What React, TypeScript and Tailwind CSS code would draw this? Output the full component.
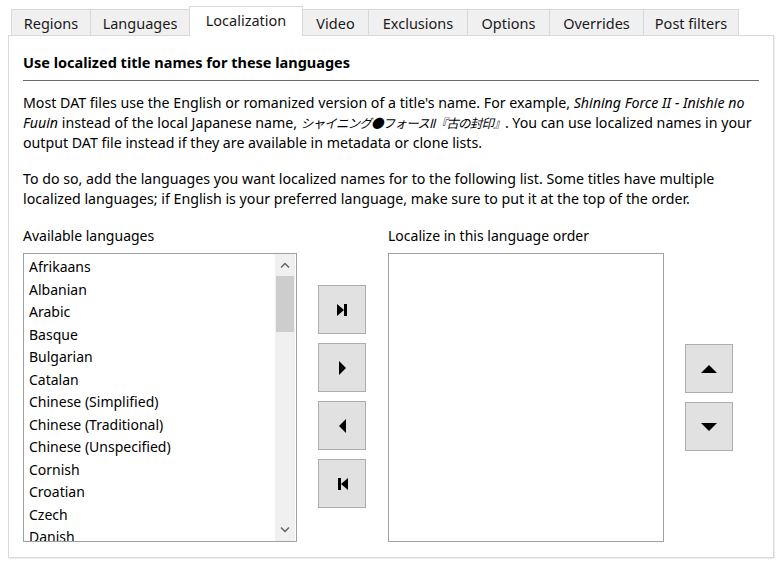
import React from "react";

const tabs: { label: string; w: string; active?: boolean }[] = [
  { label: "Regions", w: "w-[80px]" },
  { label: "Languages", w: "w-[100px]" },
  { label: "Localization", w: "w-[114px]", active: true },
  { label: "Video", w: "w-[67px]" },
  { label: "Exclusions", w: "w-[100px]" },
  { label: "Options", w: "w-[83px]" },
  { label: "Overrides", w: "w-[95px]" },
  { label: "Post filters", w: "w-[96px]" },
];

const languages = [
  "Afrikaans",
  "Albanian",
  "Arabic",
  "Basque",
  "Bulgarian",
  "Catalan",
  "Chinese (Simplified)",
  "Chinese (Traditional)",
  "Chinese (Unspecified)",
  "Cornish",
  "Croatian",
  "Czech",
  "Danish",
];

function Btn({ children }: { children: React.ReactNode }) {
  return (
    <div className="w-[48px] h-[49px] bg-[#e1e1e1] border border-[#adadad] flex items-center justify-center">
      {children}
    </div>
  );
}

export default function App() {
  return (
    <div
      className="w-[784px] h-[568px] bg-white text-[15px] text-[#000] overflow-hidden"
      style={{ fontFamily: '"Noto Sans", "Open Sans", sans-serif' }}
    >
      {/* Tab strip */}
      <div className="flex items-end pl-[11px] pt-[6px] h-[35px]">
        {tabs.map((t, i) => (
          <div
            key={t.label}
            className={
              (t.active
                ? "h-[30px] bg-white relative z-10 -mb-px pb-[2px] "
                : "h-[26px] bg-[#f0f0f0] pt-[2px] ") +
              t.w +
              (i > 0 ? " -ml-px" : "") +
              " border border-b-0 border-[#d9d9d9] flex items-center justify-center text-[14.5px] leading-none text-[#1a1a1a]"
            }
          >
            {t.label}
          </div>
        ))}
      </div>

      {/* Panel */}
      <div className="ml-[8px] w-[766px] h-[523px] border border-[#d9d9d9] bg-white shadow-[1px_1px_0_#ececec] pl-[14px] pt-[16px]">
        <div className="font-bold text-[14.5px] leading-[20px]">
          Use localized title names for these languages
        </div>
        <div className="mt-[8px] h-px w-[736px] bg-[#6a6a6a]" />

        <p className="mt-[12px] text-[14.2px] leading-[20px] whitespace-nowrap">
          Most DAT files use the English or romanized version of a title's name. For example,{" "}
          <i>Shining Force II - Inishie no</i>
          <br />
          <i>Fuuin</i> instead of the local Japanese name,{" "}
          <i style={{ fontFamily: '"Noto Sans CJK JP", sans-serif' }} className="text-[12.5px] tracking-[-0.8px]">
            シャイニング●フォースII『古の封印』
          </i>
          . You can use localized names in your
          <br />
          output DAT file instead if they are available in metadata or clone lists.
        </p>

        <p className="mt-[16px] text-[14.2px] leading-[20px] whitespace-nowrap">
          To do so, add the languages you want localized names for to the following list. Some titles have multiple
          <br />
          localized languages; if English is your preferred language, make sure to put it at the top of the order.
        </p>

        <div className="mt-[17px] flex text-[14px] leading-[20px]">
          <div className="w-[365px]">Available languages</div>
          <div>Localize in this language order</div>
        </div>

        <div className="mt-[7px] flex items-start">
          {/* Available list */}
          <div className="w-[274px] h-[289px] border border-[#a0a0a0] flex overflow-hidden">
            <div className="flex-1 pt-[2px] pl-[5px] overflow-hidden">
              {languages.map((l) => (
                <div key={l} className="h-[22.5px] leading-[22.5px] text-[14px] whitespace-nowrap">
                  {l}
                </div>
              ))}
            </div>
            <div className="w-[20px] mr-px bg-[#f0f0f0] flex flex-col items-center">
              <div className="h-[22px] w-full flex items-center justify-center">
                <svg width="10" height="6" viewBox="0 0 10 6">
                  <path d="M1 5.5 L5 1.5 L9 5.5" fill="none" stroke="#606060" strokeWidth="1.4" />
                </svg>
              </div>
              <div className="w-[18px] h-[56px] bg-[#cdcdcd]" />
              <div className="flex-1" />
              <div className="h-[22px] w-full flex items-center justify-center">
                <svg width="10" height="6" viewBox="0 0 10 6">
                  <path d="M1 0.5 L5 4.5 L9 0.5" fill="none" stroke="#606060" strokeWidth="1.4" />
                </svg>
              </div>
            </div>
          </div>

          {/* Move buttons */}
          <div className="ml-[21px] mt-[32px] flex flex-col gap-[9px]">
            <Btn>
              <svg width="11" height="12" viewBox="0 0 11 12">
                <path d="M0 0 L7 6 L0 12 Z" fill="#000" />
                <rect x="7" y="0" width="3" height="12" fill="#000" />
              </svg>
            </Btn>
            <Btn>
              <svg width="7" height="14" viewBox="0 0 7 14">
                <path d="M0 0 L7 7 L0 14 Z" fill="#000" />
              </svg>
            </Btn>
            <Btn>
              <svg width="7" height="14" viewBox="0 0 7 14">
                <path d="M7 0 L0 7 L7 14 Z" fill="#000" />
              </svg>
            </Btn>
            <Btn>
              <svg width="11" height="12" viewBox="0 0 11 12">
                <rect x="1" y="0" width="3" height="12" fill="#000" />
                <path d="M11 0 L4 6 L11 12 Z" fill="#000" />
              </svg>
            </Btn>
          </div>

          {/* Order list */}
          <div className="ml-[22px] w-[276px] h-[289px] border border-[#a0a0a0] bg-white" />

          {/* Up/Down */}
          <div className="ml-[21px] mt-[91px] flex flex-col gap-[9px]">
            <Btn>
              <svg width="16" height="8" viewBox="0 0 16 8">
                <path d="M0 8 L8 0 L16 8 Z" fill="#000" />
              </svg>
            </Btn>
            <Btn>
              <svg width="16" height="8" viewBox="0 0 16 8">
                <path d="M0 0 L8 8 L16 0 Z" fill="#000" />
              </svg>
            </Btn>
          </div>
        </div>
      </div>
    </div>
  );
}
